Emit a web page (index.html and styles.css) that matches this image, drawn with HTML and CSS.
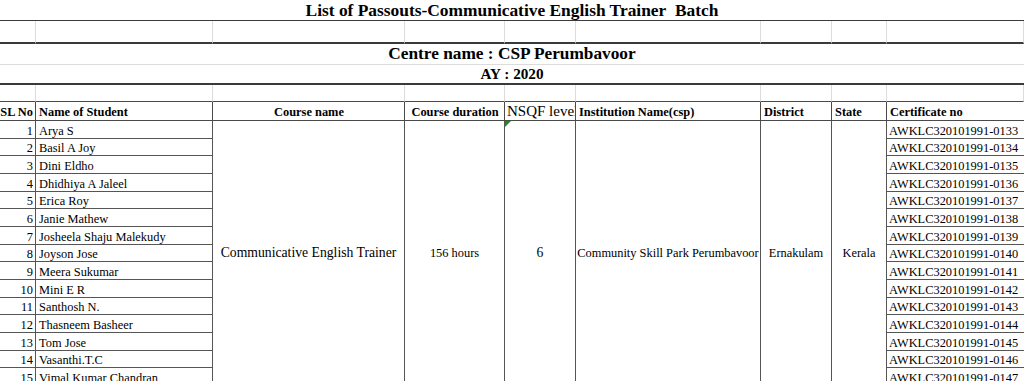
FILE: index.html
```html
<!DOCTYPE html>
<html lang="en">
<head>
<meta charset="utf-8">
<title>List of Passouts</title>
<link rel="stylesheet" href="styles.css">
</head>
<body>
<table class="sheet">
  <colgroup>
    <col class="c-sl"><col class="c-name"><col class="c-course"><col class="c-dur"><col class="c-nsqf"><col class="c-inst"><col class="c-dist"><col class="c-state"><col class="c-cert">
  </colgroup>
  <tbody>
    <tr class="r-title"><td colspan="9" class="title">List of Passouts-Communicative English Trainer&nbsp; Batch</td></tr>
    <tr class="r-blank1"><td></td><td></td><td></td><td></td><td></td><td></td><td></td><td></td><td></td></tr>
    <tr class="r-centre"><td colspan="9" class="centre">Centre name : CSP Perumbavoor</td></tr>
    <tr class="r-ay"><td colspan="9" class="ay">AY : 2020</td></tr>
    <tr class="r-blank2"><td></td><td></td><td></td><td></td><td></td><td></td><td></td><td></td><td></td></tr>
    <tr class="r-head">
      <th class="right">SL No</th>
      <th>Name of Student</th>
      <th class="center">Course name</th>
      <th class="center">Course duration</th>
      <th class="nsqf-h">NSQF level</th>
      <th>Institution Name(csp)</th>
      <th>District</th>
      <th>State</th>
      <th>Certificate no</th>
    </tr>
    <tr class="d">
      <td class="num">1</td><td class="nm">Arya S</td>
      <td rowspan="15" class="merged big">Communicative English Trainer</td>
      <td rowspan="15" class="merged">156 hours</td>
      <td rowspan="15" class="merged big flag">6</td>
      <td rowspan="15" class="merged">Community Skill Park Perumbavoor</td>
      <td rowspan="15" class="merged">Ernakulam</td>
      <td rowspan="15" class="merged">Kerala</td>
      <td class="cert">AWKLC320101991-0133</td>
    </tr>
    <tr class="d"><td class="num">2</td><td class="nm">Basil A Joy</td><td class="cert">AWKLC320101991-0134</td></tr>
    <tr class="d"><td class="num">3</td><td class="nm">Dini Eldho</td><td class="cert">AWKLC320101991-0135</td></tr>
    <tr class="d"><td class="num">4</td><td class="nm">Dhidhiya A Jaleel</td><td class="cert">AWKLC320101991-0136</td></tr>
    <tr class="d"><td class="num">5</td><td class="nm">Erica Roy</td><td class="cert">AWKLC320101991-0137</td></tr>
    <tr class="d"><td class="num">6</td><td class="nm">Janie Mathew</td><td class="cert">AWKLC320101991-0138</td></tr>
    <tr class="d"><td class="num">7</td><td class="nm">Josheela Shaju Malekudy</td><td class="cert">AWKLC320101991-0139</td></tr>
    <tr class="d"><td class="num">8</td><td class="nm">Joyson Jose</td><td class="cert">AWKLC320101991-0140</td></tr>
    <tr class="d"><td class="num">9</td><td class="nm">Meera Sukumar</td><td class="cert">AWKLC320101991-0141</td></tr>
    <tr class="d"><td class="num">10</td><td class="nm">Mini E R</td><td class="cert">AWKLC320101991-0142</td></tr>
    <tr class="d"><td class="num">11</td><td class="nm">Santhosh N.</td><td class="cert">AWKLC320101991-0143</td></tr>
    <tr class="d"><td class="num">12</td><td class="nm">Thasneem Basheer</td><td class="cert">AWKLC320101991-0144</td></tr>
    <tr class="d"><td class="num">13</td><td class="nm">Tom Jose</td><td class="cert">AWKLC320101991-0145</td></tr>
    <tr class="d"><td class="num">14</td><td class="nm">Vasanthi.T.C</td><td class="cert">AWKLC320101991-0146</td></tr>
    <tr class="d"><td class="num">15</td><td class="nm">Vimal Kumar Chandran</td><td class="cert">AWKLC320101991-0147</td></tr>
  </tbody>
</table>
</body>
</html>
```
FILE: styles.css
```css
html, body {
  margin: 0;
  padding: 0;
  background: #ffffff;
  overflow: hidden;
}
body {
  width: 1024px;
  height: 381px;
  font-family: "Liberation Serif", "Times New Roman", serif;
  color: #000;
}
.sheet {
  border-collapse: separate;
  border-spacing: 0;
  table-layout: fixed;
  width: 1024px;
  font-size: 12.4px;
}
.c-sl { width: 36px; }
.c-name { width: 177px; }
.c-course { width: 192px; }
.c-dur { width: 100px; }
.c-nsqf { width: 71px; }
.c-inst { width: 185px; }
.c-dist { width: 71px; }
.c-state { width: 55px; }
.c-cert { width: 137px; }

td, th {
  box-sizing: border-box;
  padding: 0;
  white-space: nowrap;
  overflow: hidden;
  line-height: 14px;
}

/* top block */
.r-title { height: 21px; }
.title {
  border-bottom: 1px solid #3a3a3a;
  text-align: center;
  font-weight: bold;
  font-size: 17.4px;
  line-height: 18px;
  vertical-align: bottom;
  padding-bottom: 1px;
}
.r-blank1 { height: 23px; }
.r-blank1 td {
  border-right: 1px solid #dcdcdc;
  border-bottom: 2px solid #3a3a3a;
}
.r-centre { height: 21px; }
.centre {
  border-bottom: 1px solid #dcdcdc;
  text-align: center;
  font-weight: bold;
  font-size: 17.3px;
  line-height: 18px;
  vertical-align: bottom;
  padding-bottom: 1px;
}
.r-ay { height: 20px; }
.ay {
  border-bottom: 2px solid #3a3a3a;
  text-align: center;
  font-weight: bold;
  font-size: 15.2px;
  line-height: 16px;
  vertical-align: bottom;
  padding-bottom: 1px;
}
.r-blank2 { height: 17px; }
.r-blank2 td {
  border-right: 1px solid #dcdcdc;
  border-bottom: 1px solid #4a4a4a;
}

/* header row */
.r-head { height: 19px; }
.r-head th {
  border-right: 1px solid #4a4a4a;
  border-bottom: 1px solid #4a4a4a;
  font-weight: bold;
  text-align: left;
  vertical-align: bottom;
  padding: 0 2px 1px 3px;
}
.r-head th.right { text-align: right; padding-right: 2px; padding-left: 0; }
.r-head th.center { text-align: center; }
.r-head th.nsqf-h {
  font-weight: normal;
  font-size: 15px;
  line-height: 16px;
  vertical-align: top;
  padding-top: 1px;
  padding-left: 2px;
  padding-right: 0;
  text-overflow: clip;
}
.r-head th:last-child, .d td.cert { border-right: none; }

/* data rows */
.d { height: 17.67px; }
.d td {
  border-right: 1px solid #555;
  border-bottom: 1px solid #555;
  vertical-align: bottom;
}
.d td.num { text-align: right; padding-right: 2px; }
.d td.nm { padding-left: 3px; }
.d td.cert { padding-left: 2px; }
.d td.merged {
  text-align: center;
  vertical-align: middle;
}
.d td.big { font-size: 13.7px; }
.d td.flag { position: relative; }
.d td.flag::before {
  content: "";
  position: absolute;
  left: 0;
  top: 0;
  width: 0;
  height: 0;
  border-top: 6px solid #1f8a1f;
  border-right: 6px solid transparent;
}
```
